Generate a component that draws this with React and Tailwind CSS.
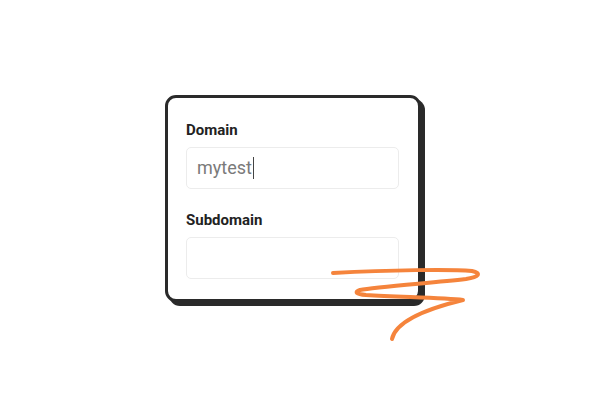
import React from "react";

const Field = ({ label, value, className }) => (
  <div className={className}>
    <div className="text-[15px] leading-5 font-bold text-[#222]">{label}</div>
    <div className="mt-[7px] h-[42px] rounded-[5px] border border-[#ececec] flex items-center px-[10px]">
      {value && (
        <>
          <span className="text-[18px] text-[#7a7a7a] leading-none">{value}</span>
          <span className="ml-[1px] w-[1.5px] h-[22px] bg-[#444]"></span>
        </>
      )}
    </div>
  </div>
);

const App = () => {
  return (
    <div className="relative w-[606px] h-[412px] bg-white overflow-hidden" style={{ fontFamily: "Roboto, 'Liberation Sans', sans-serif" }}>
      <div className="pl-[165px] pt-[95px]">
        <div className="w-[256px] h-[207px] border-[3px] border-[#2a2a2a] rounded-[11px] bg-white shadow-[4px_4px_0_#2a2a2a] pl-[18px] pr-[19px] pt-[22px]">
          <Field label="Domain" value="mytest" />
          <Field label="Subdomain" className="mt-[21px]" />
        </div>
      </div>

      <svg className="absolute left-0 top-0" width="606" height="412" viewBox="0 0 606 412" fill="none">
        <path
          d="M333,273 C390,270 450,269 472,271 C482,273 479,277 466,279 C430,283 375,287 360,290 C354,292 356,294 366,295 C400,297 445,298 463,300 C430,308 396,320 392,339"
          stroke="#f5843c"
          strokeWidth="4"
          strokeLinecap="round"
          strokeLinejoin="round"
        />
      </svg>
    </div>
  );
};

export default App;
